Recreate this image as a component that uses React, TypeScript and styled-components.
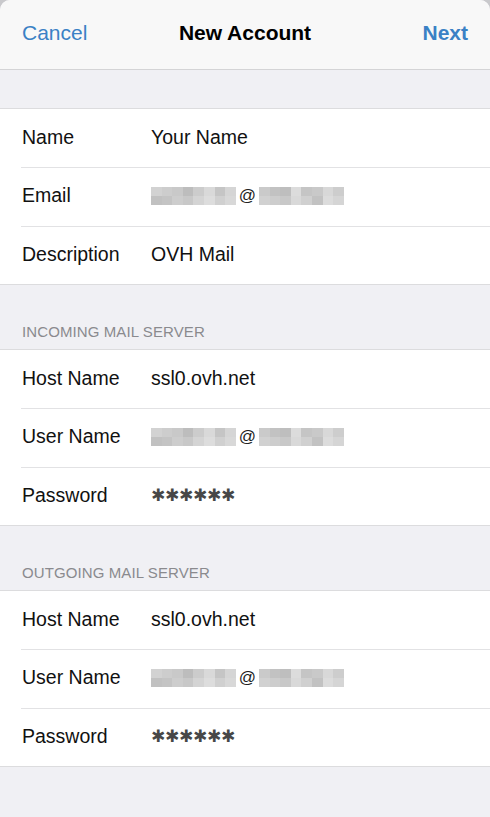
import React from 'react'
import styled, { createGlobalStyle } from 'styled-components'

const GlobalStyle = createGlobalStyle`
  html, body {
    margin: 0;
    padding: 0;
    background: #c9c9cc;
  }
  body {
    font-family: 'Liberation Sans', Arial, sans-serif;
    -webkit-font-smoothing: antialiased;
  }
`

const Sheet = styled.div`
  width: 490px;
  min-height: 817px;
  background: #f0f0f4;
  border-radius: 10px 10px 0 0;
  overflow: hidden;
  display: flex;
  flex-direction: column;
`

const NavBar = styled.header`
  height: 69px;
  background: #f8f8f8;
  border-bottom: 1px solid #d4d4d6;
  display: grid;
  grid-template-columns: 1fr auto 1fr;
  align-items: center;
  padding: 0 22px;
  font-size: 21px;
`

const NavButton = styled.span<{ $bold?: boolean; $right?: boolean }>`
  color: #3a81c5;
  font-weight: ${p => (p.$bold ? 700 : 400)};
  justify-self: ${p => (p.$right ? 'end' : 'start')};
  margin-top: -4px;
`

const Title = styled.span`
  color: #000;
  font-weight: 700;
  margin-top: -4px;
`

const TopGap = styled.div`
  height: 38px;
`

const SectionHeader = styled.div`
  height: 64px;
  display: flex;
  align-items: flex-end;
  padding: 0 22px 9px;
  box-sizing: border-box;
  color: #8a8a8e;
  font-size: 15px;
  letter-spacing: 0.1px;
`

const Group = styled.section`
  background: #fff;
  border-top: 1px solid #dcdcde;
  border-bottom: 1px solid #dcdcde;
`

const Row = styled.div`
  padding-left: 21px;
`

const RowInner = styled.div<{ $first?: boolean }>`
  height: ${p => (p.$first ? '58px' : '58.5px')};
  box-sizing: border-box;
  display: flex;
  align-items: center;
  padding: 0 0 2px 1px;
  border-top: ${p => (p.$first ? 'none' : '1px solid #e2e2e4')};
  font-size: 19.5px;
  color: #111;
`

const Label = styled.span`
  width: 129px;
  flex-shrink: 0;
`

const Value = styled.span`
  display: flex;
  align-items: center;
  color: #111;
`

const Star = styled.span`
  display: inline-flex;
  justify-content: center;
  width: 14px;
  font-family: 'DejaVu Sans', sans-serif;
  font-size: 17px;
  line-height: 1;
  color: #474747;
`

const Blurred = styled.span`
  display: flex;
  align-items: center;
  gap: 2px;
`

const PixelGrid = styled.span`
  display: grid;
  grid-template-columns: repeat(8, 10.6px);
  grid-template-rows: 9px 9px;
`

const Pixel = styled.span<{ $shade: string }>`
  background: ${p => p.$shade};
`

const At = styled.span`
  font-size: 17px;
  color: #222;
  margin: 0 1px;
`

const left = [
  '#d2d2d2', '#cdcdcd', '#c9c9c9', '#bdbdbd', '#cccccc', '#d9d9d9', '#c5c5c5', '#d5d5d5',
  '#c1c1c1', '#c4c4c4', '#cdcdcd', '#c8c8c8', '#d4d4d4', '#dddddd', '#d0d0d0', '#d8d8d8',
]
const right = [
  '#cacaca', '#c2c2c2', '#bebebe', '#dcdcdc', '#c5c5c5', '#c9c9c9', '#d8d8d8', '#cdcdcd',
  '#d1d1d1', '#cdcdcd', '#c8c8c8', '#d9d9d9', '#d0d0d0', '#c2c2c2', '#dcdcdc', '#d5d5d5',
]

const PixelBlock: React.FC<{ shades: string[] }> = ({ shades }) => (
  <PixelGrid>
    {shades.map((s, i) => (
      <Pixel key={i} $shade={s} />
    ))}
  </PixelGrid>
)

const MaskedEmail = () => (
  <Blurred>
    <PixelBlock shades={left} />
    <At>@</At>
    <PixelBlock shades={right} />
  </Blurred>
)

const MaskedPassword = () => (
  <>
    {Array.from({ length: 6 }, (_, i) => (
      <Star key={i}>✱</Star>
    ))}
  </>
)

type Field = { label: string; value: React.ReactNode }

const FieldGroup: React.FC<{ fields: Field[] }> = ({ fields }) => (
  <Group>
    {fields.map((f, i) => (
      <Row key={f.label}>
        <RowInner $first={i === 0}>
          <Label>{f.label}</Label>
          <Value>{f.value}</Value>
        </RowInner>
      </Row>
    ))}
  </Group>
)

const serverFields: Field[] = [
  { label: 'Host Name', value: 'ssl0.ovh.net' },
  { label: 'User Name', value: <MaskedEmail /> },
  { label: 'Password', value: <MaskedPassword /> },
]

const App = () => (
  <>
    <GlobalStyle />
    <Sheet>
      <NavBar>
        <NavButton>Cancel</NavButton>
        <Title>New Account</Title>
        <NavButton $bold $right>
          Next
        </NavButton>
      </NavBar>
      <TopGap />
      <FieldGroup
        fields={[
          { label: 'Name', value: 'Your Name' },
          { label: 'Email', value: <MaskedEmail /> },
          { label: 'Description', value: 'OVH Mail' },
        ]}
      />
      <SectionHeader>INCOMING MAIL SERVER</SectionHeader>
      <FieldGroup fields={serverFields} />
      <SectionHeader>OUTGOING MAIL SERVER</SectionHeader>
      <FieldGroup fields={serverFields} />
    </Sheet>
  </>
)

export default App
